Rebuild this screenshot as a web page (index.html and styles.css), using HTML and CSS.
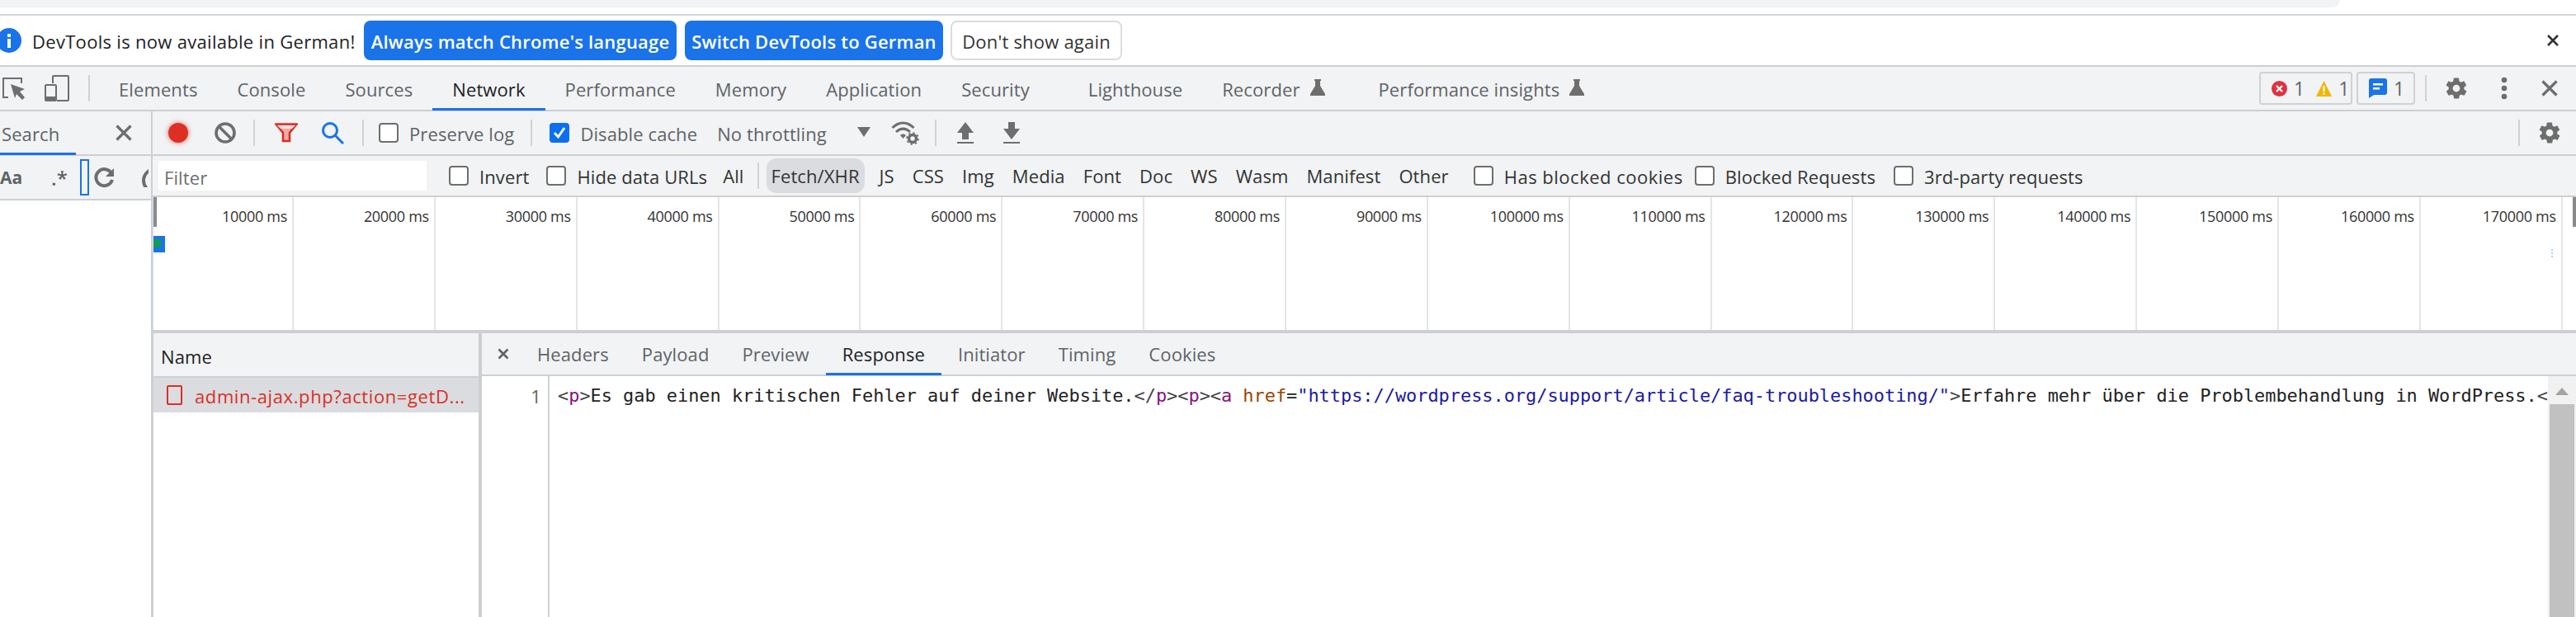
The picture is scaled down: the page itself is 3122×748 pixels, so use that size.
FILE: index.html
```html
<!DOCTYPE html>
<html lang="en">
<head>
    <meta charset="UTF-8">
    <title>DevTools Network</title>
    <link rel="stylesheet" href="styles.css">
</head>
<body>
    <!-- Browser strip above DevTools -->
    <div class="top-strip"><div class="omnibox"></div></div>

    <!-- Language infobar -->
    <div class="infobar">
        <svg class="info-icon" width="30" height="30" viewBox="0 0 30 30"><circle cx="15" cy="15" r="15" fill="#1a73e8"/><rect x="13" y="13" width="4" height="11" fill="#fff"/><rect x="13" y="7" width="4" height="4" fill="#fff"/></svg>
        <span class="info-text">DevTools is now available in German!</span>
        <button class="info-btn primary lang-btn">Always match Chrome's language</button>
        <button class="info-btn primary switch-btn">Switch DevTools to German</button>
        <button class="info-btn plain">Don't show again</button>
        <svg class="info-close" width="16" height="16" viewBox="0 0 16 16"><path d="M2 2l12 12M14 2L2 14" stroke="#333" stroke-width="2.6"/></svg>
    </div>

    <!-- Main tabs -->
    <div class="tabbar">
        <svg class="inspect-icon" width="30" height="30" viewBox="0 0 30 30"><path d="M9 26H3V3h22v6" fill="none" stroke="#6e6e6e" stroke-width="2"/><path d="M12 10l17 6-6 3 6 7-3 3-7-7-2 5z" fill="#6e6e6e"/></svg>
        <svg class="device-icon" width="30" height="32" viewBox="0 0 30 32"><path d="M10 10V2a1 1 0 0 1 1-1h17a1 1 0 0 1 1 1v28a1 1 0 0 1-1 1H15" fill="none" stroke="#6e6e6e" stroke-width="2"/><rect x="1" y="12" width="13" height="19" rx="1" fill="none" stroke="#6e6e6e" stroke-width="2"/><rect x="1" y="26" width="13" height="5" fill="#6e6e6e"/></svg>
        <span class="vline tabs-line"></span>
        <div class="tab">Elements</div>
        <div class="tab">Console</div>
        <div class="tab">Sources</div>
        <div class="tab active">Network</div>
        <div class="tab">Performance</div>
        <div class="tab">Memory</div>
        <div class="tab">Application</div>
        <div class="tab security-tab">Security</div>
        <div class="tab">Lighthouse</div>
        <div class="tab flask-tab">Recorder
            <svg width="18" height="20" viewBox="0 0 18 20"><path d="M5 0h8v2h-1v6l6 10v2H0v-2l6-10V2H5z" fill="#6e6e6e"/></svg>
        </div>
        <div class="tab flask-tab">Performance insights
            <svg width="18" height="20" viewBox="0 0 18 20"><path d="M5 0h8v2h-1v6l6 10v2H0v-2l6-10V2H5z" fill="#6e6e6e"/></svg>
        </div>
        <div class="tab-right">
            <div class="badge counts">
                <svg width="19" height="19" viewBox="0 0 19 19"><circle cx="9.5" cy="9.5" r="9.5" fill="#e0323f"/><path d="M6 6l7 7M13 6l-7 7" stroke="#fff" stroke-width="2.4"/></svg>
                <span class="count">1</span>
                <svg class="warn" width="19" height="19" viewBox="0 0 19 19"><path d="M9.5 0L19 19H0z" fill="#f2b600"/><rect x="8.4" y="6" width="2.2" height="7" fill="#fff"/><rect x="8.4" y="14.5" width="2.2" height="2.2" fill="#fff"/></svg>
                <span class="count">1</span>
            </div>
            <div class="badge issues">
                <svg width="22" height="24" viewBox="0 0 22 24"><path d="M3 0h16a3 3 0 0 1 3 3v14a3 3 0 0 1-3 3H6l-6 4V3a3 3 0 0 1 3-3z" fill="#1a73e8"/><path d="M5 6h12v2.4H5zM5 11h8v2.4H5z" fill="#fff"/></svg>
                <span class="count">1</span>
            </div>
            <span class="vline right-line"></span>
            <svg class="gear gear-top" width="30" height="30" viewBox="0 0 24 24"><path d="M19.4 13c.1-.3.1-.7.1-1s0-.7-.1-1l2.100-1.600c.2-.2.2-.4.1-.6l-2-3.500c-.1-.2-.4-.3-.6-.2l-2.500 1c-.5-.4-1.100-.7-1.700-1l-.4-2.700c0-.2-.2-.4-.5-.4h-4c-.3 0-.5.2-.5.4l-.4 2.700c-.6.3-1.200.6-1.700 1l-2.500-1c-.2-.1-.5 0-.6.2l-2 3.500c-.1.2-.1.4.1.6L4.600 11c-.1.3-.1.7-.1 1s0 .7.1 1l-2.100 1.600c-.2.2-.2.4-.1.6l2 3.500c.1.2.4.3.6.2l2.500-1c.5.4 1.100.7 1.700 1l.4 2.700c0 .2.2.4.5.4h4c.3 0 .5-.2.5-.4l.4-2.700c.6-.3 1.200-.6 1.700-1l2.500 1c.2.1.5 0 .6-.2l2-3.500c.1-.2.1-.4-.1-.6zM12 15.500a3.500 3.500 0 1 1 0-7 3.500 3.500 0 0 1 0 7z" fill="#6e6e6e"/></svg>
            <svg class="dots" width="8" height="28" viewBox="0 0 8 28"><circle cx="4" cy="4" r="3.3" fill="#6e6e6e"/><circle cx="4" cy="14" r="3.3" fill="#6e6e6e"/><circle cx="4" cy="24" r="3.3" fill="#6e6e6e"/></svg>
            <svg class="tab-close" width="20" height="20" viewBox="0 0 20 20"><path d="M1.500 1.500l17 17M18.500 1.500l-17 17" stroke="#6e6e6e" stroke-width="3.2"/></svg>
        </div>
    </div>

    <div class="panel">
        <!-- Search drawer -->
        <div class="sidebar">
            <div class="search-head">
                <div class="search-tab">Search</div>
                <svg width="20" height="20" viewBox="0 0 20 20"><path d="M1.500 1.500l17 17M18.500 1.500l-17 17" stroke="#6e6e6e" stroke-width="3.2"/></svg>
            </div>
            <div class="search-tools">
                <span class="case">Aa</span>
                <span class="regex">.*</span>
                <span class="focus-box"></span>
                <svg class="refresh" width="26" height="26" viewBox="0 0 26 26"><path d="M21 8a10 10 0 1 0 1 8" fill="none" stroke="#6e6e6e" stroke-width="4"/><path d="M24 2v10H14z" fill="#6e6e6e"/></svg>
                <span class="clipped"></span>
            </div>
        </div>

        <div class="network">
            <!-- Network toolbar -->
            <div class="toolbar">
                <span class="record"></span>
                <svg class="clear" width="26" height="26" viewBox="0 0 26 26"><circle cx="13" cy="13" r="11" fill="none" stroke="#6e6e6e" stroke-width="3.6"/><path d="M5 5l16 16" stroke="#6e6e6e" stroke-width="3.6"/></svg>
                <span class="vline line-a"></span>
                <svg class="funnel" width="28" height="24" viewBox="0 0 28 24"><path d="M1.500 1.500h25L18 12v10h-8V12z" fill="#f0a9a5" stroke="#d93025" stroke-width="2.6"/><path d="M3 3h22l-4 4H7z" fill="#f9dcda"/></svg>
                <svg class="search-icon" width="28" height="28" viewBox="0 0 28 28"><circle cx="11" cy="11" r="8.500" fill="none" stroke="#1a73e8" stroke-width="3"/><path d="M17 17l10 10" stroke="#1a73e8" stroke-width="3"/></svg>
                <span class="vline line-b"></span>
                <label class="check preserve"><span class="box"></span>Preserve log</label>
                <span class="vline line-c"></span>
                <label class="check disable"><span class="box on"><svg width="24" height="24" viewBox="0 0 24 24"><path d="M6 12l4.500 5L18 6" fill="none" stroke="#fff" stroke-width="2.8"/></svg></span>Disable cache</label>
                <span class="throttle">No throttling</span>
                <span class="caret"></span>
                <svg class="wifi" width="34" height="30" viewBox="0 0 34 30"><path d="M1.500 9c8-8 18-8 26 0M6 14c5.500-5 11.500-5 17 0" fill="none" stroke="#6e6e6e" stroke-width="3"/><path d="M11 18c2-2 5-2 7 0l-3.500 4z" fill="#6e6e6e"/><circle cx="26" cy="22" r="4.500" fill="none" stroke="#6e6e6e" stroke-width="3.5"/><circle cx="26" cy="22" r="7" fill="none" stroke="#6e6e6e" stroke-width="1.6" stroke-dasharray="2.5 3"/></svg>
                <span class="vline line-d"></span>
                <svg class="arrow up" width="22" height="26" viewBox="0 0 22 26"><path d="M11 0l10 13h-6v8H7v-8H1z" fill="#6e6e6e"/><rect x="1" y="24" width="20" height="2" fill="#6e6e6e"/></svg>
                <svg class="arrow down" width="22" height="26" viewBox="0 0 22 26"><path d="M11 21L1 8h6V0h8v8h6z" fill="#6e6e6e"/><rect x="1" y="24" width="20" height="2" fill="#6e6e6e"/></svg>
                <span class="vline line-e"></span>
                <svg class="gear" width="30" height="30" viewBox="0 0 24 24"><path d="M19.4 13c.1-.3.1-.7.1-1s0-.7-.1-1l2.100-1.600c.2-.2.2-.4.1-.6l-2-3.500c-.1-.2-.4-.3-.6-.2l-2.500 1c-.5-.4-1.100-.7-1.700-1l-.4-2.700c0-.2-.2-.4-.5-.4h-4c-.3 0-.5.2-.5.4l-.4 2.700c-.6.3-1.200.6-1.700 1l-2.500-1c-.2-.1-.5 0-.6.2l-2 3.500c-.1.2-.1.4.1.6L4.600 11c-.1.3-.1.7-.1 1s0 .7.1 1l-2.100 1.600c-.2.2-.2.4-.1.6l2 3.500c.1.2.4.3.6.2l2.500-1c.5.4 1.100.7 1.700 1l.4 2.700c0 .2.2.4.5.4h4c.3 0 .5-.2.5-.4l.4-2.700c.6-.3 1.200-.6 1.700-1l2.500 1c.2.1.5 0 .6-.2l2-3.500c.1-.2.1-.4-.1-.6zM12 15.500a3.500 3.500 0 1 1 0-7 3.500 3.500 0 0 1 0 7z" fill="#6e6e6e"/></svg>
            </div>

            <!-- Filter row -->
            <div class="filterbar">
                <div class="filter-input">Filter</div>
                <label class="check dark invert"><span class="box"></span>Invert</label>
                <label class="check dark hide-urls"><span class="box"></span>Hide data URLs</label>
                <span class="type all">All</span>
                <span class="vline line-f"></span>
                <span class="type selected">Fetch/XHR</span>
                <span class="type">JS</span>
                <span class="type">CSS</span>
                <span class="type">Img</span>
                <span class="type">Media</span>
                <span class="type">Font</span>
                <span class="type">Doc</span>
                <span class="type">WS</span>
                <span class="type">Wasm</span>
                <span class="type">Manifest</span>
                <span class="type">Other</span>
                <label class="check dark blocked"><span class="box"></span>Has blocked cookies</label>
                <label class="check dark blocked-req"><span class="box"></span>Blocked Requests</label>
                <label class="check dark third"><span class="box"></span>3rd-party requests</label>
            </div>

            <!-- Timeline overview -->
            <div class="overview">
                <div class="tick first">10000 ms</div>
                <div class="tick">20000 ms</div>
                <div class="tick">30000 ms</div>
                <div class="tick">40000 ms</div>
                <div class="tick">50000 ms</div>
                <div class="tick">60000 ms</div>
                <div class="tick">70000 ms</div>
                <div class="tick">80000 ms</div>
                <div class="tick">90000 ms</div>
                <div class="tick">100000 ms</div>
                <div class="tick">110000 ms</div>
                <div class="tick">120000 ms</div>
                <div class="tick">130000 ms</div>
                <div class="tick">140000 ms</div>
                <div class="tick">150000 ms</div>
                <div class="tick">160000 ms</div>
                <div class="tick">170000 ms</div>
                <span class="handle left"></span>
                <span class="handle right"></span>
                <span class="req-bar"><span class="req-fill"></span></span>
                <span class="req-dash"></span>
            </div>

            <!-- Requests and response -->
            <div class="split">
                <div class="names">
                    <div class="names-head">Name</div>
                    <div class="names-row">
                        <span class="file-icon"></span>
                        <span class="file-name">admin-ajax.php?action=getD...</span>
                    </div>
                </div>
                <div class="detail">
                    <div class="detail-tabs">
                        <svg class="detail-close" width="14" height="14" viewBox="0 0 14 14"><path d="M1.500 1.500l11 11M12.500 1.500l-11 11" stroke="#5f6368" stroke-width="2.6"/></svg>
                        <div class="dtab">Headers</div>
                        <div class="dtab">Payload</div>
                        <div class="dtab">Preview</div>
                        <div class="dtab active">Response</div>
                        <div class="dtab">Initiator</div>
                        <div class="dtab">Timing</div>
                        <div class="dtab">Cookies</div>
                    </div>
                    <div class="code">
                        <div class="gutter">1</div>
                        <div class="code-line"><span class="br">&lt;</span><span class="tg">p</span><span class="br">&gt;</span>Es gab einen kritischen Fehler auf deiner Website.<span class="br">&lt;/</span><span class="tg">p</span><span class="br">&gt;&lt;</span><span class="tg">p</span><span class="br">&gt;&lt;</span><span class="tg">a</span> <span class="at">href</span>=<span class="st">"https://wordpress.org/support/article/faq-troubleshooting/"</span><span class="br">&gt;</span>Erfahre mehr über die Problembehandlung in WordPress.<span class="br">&lt;</span></div>
                        <div class="scrollbar"><div class="scroll-up"></div><div class="scroll-thumb"></div></div>
                    </div>
                </div>
            </div>
        </div>
    </div>
</body>
</html>
```
FILE: styles.css
```css
* {
    margin: 0;
    padding: 0;
    box-sizing: border-box;
}

html, body {
    width: 3122px;
    height: 748px;
    overflow: hidden;
}

body {
    font-family: "Open Sans", "Noto Sans", sans-serif;
    font-size: 22px;
    letter-spacing: 0.1px;
    color: #5f6368;
    background-color: white;
}

.vline {
    display: block;
    flex: none;
    width: 2px;
    height: 32px;
    background-color: #d0d2d5;
}

/* Browser strip */
.top-strip {
    height: 19px;
    border-bottom: 2px solid #d5d6d8;
}

.omnibox {
    width: 2836px;
    height: 9px;
    background-color: #f1f3f4;
    border-bottom-right-radius: 14px;
}

/* Infobar */
.infobar {
    display: flex;
    align-items: center;
    height: 62px;
    border-bottom: 2px solid #cdcfd2;
}

.info-icon {
    margin-left: -4px;
    flex: none;
}

.info-text {
    margin-left: 13px;
    padding-top: 2px;
    color: #222;
    width: 402px;
    letter-spacing: 0.3px;
    white-space: nowrap;
}

.info-btn {
    height: 48px;
    border: none;
    border-radius: 8px;
    font-family: inherit;
    font-size: 22px;
    padding-top: 2px;
    white-space: nowrap;
}

.primary {
    background-color: #1a73e8;
    color: white;
    font-weight: 600;
    letter-spacing: 0.2px;
}

.lang-btn {
    width: 379px;
}

.switch-btn {
    width: 313px;
    margin-left: 10px;
}

.plain {
    width: 208px;
    margin-left: 9px;
    background-color: white;
    color: #333;
    border: 2px solid #dadce0;
    letter-spacing: 0.2px;
}

.info-close {
    margin-left: auto;
    margin-right: 20px;
}

/* Main tabs */
.tabbar {
    display: flex;
    align-items: center;
    height: 54px;
    background-color: #f1f3f4;
    border-bottom: 2px solid #cdcfd2;
}

.inspect-icon {
    margin-left: 1px;
    flex: none;
}

.device-icon {
    margin-left: 23px;
    flex: none;
}

.tabs-line {
    margin-left: 23px;
    margin-right: 11px;
}

.tab {
    display: flex;
    align-items: center;
    height: 52px;
    padding: 3px 24px 0;
    white-space: nowrap;
    border-bottom: 3px solid transparent;
    margin-bottom: -1px;
}

.tab.active {
    color: #202124;
    border-bottom-color: #1a73e8;
}

.security-tab {
    padding-right: 47px;
}

.flask-tab svg {
    margin-left: 12px;
    margin-top: -4px;
}

.flask-tab {
    padding-right: 41px;
}

.tab-right {
    display: flex;
    align-items: center;
    margin-left: auto;
}

.badge {
    display: flex;
    align-items: center;
    height: 40px;
    border: 2px solid #cfd1d4;
    border-radius: 4px;
}

.counts {
    width: 113px;
    padding-left: 13px;
}

.issues {
    width: 71px;
    margin-left: 5px;
    padding-left: 13px;
}

.count {
    margin-left: 8px;
    font-size: 23px;
    color: #5f6368;
}

.warn {
    margin-left: 14px;
}

.right-line {
    margin-left: 12px;
}

.gear-top {
    margin-left: 21px;
}

.dots {
    margin-left: 39px;
}

.tab-close {
    margin-left: 41px;
    margin-right: 22px;
}

/* Panel below the tabs */
.panel {
    display: flex;
    height: 613px;
}

.sidebar {
    width: 185px;
    flex: none;
    border-right: 2px solid #cdcfd2;
    background-color: white;
}

.search-head {
    display: flex;
    align-items: center;
    height: 54px;
    background-color: #f1f3f4;
    border-bottom: 2px solid #cdcfd2;
}

.search-tab {
    width: 92px;
    height: 54px;
    line-height: 56px;
    padding-left: 2px;
    border-bottom: 3px solid #1a73e8;
    flex: none;
}

.search-head svg {
    margin-left: 48px;
}

.search-tools {
    display: flex;
    align-items: center;
    height: 54px;
    background-color: #f1f3f4;
    border-bottom: 2px solid #cdcfd2;
}

.case {
    font-weight: 700;
    width: 62px;
    font-size: 21px;
    flex: none;
}

.regex {
    width: 35px;
    flex: none;
    font-size: 24px;
    font-weight: 600;
}

.focus-box {
    width: 11px;
    height: 44px;
    border: 2px solid #1a73e8;
    flex: none;
}

.refresh {
    margin-left: 6px;
    flex: none;
}

.clipped {
    display: block;
    width: 8px;
    height: 24px;
    margin-left: 32px;
    overflow: hidden;
    flex: none;
}

.clipped::before {
    content: "";
    display: block;
    width: 24px;
    height: 24px;
    border: 4px solid #6e6e6e;
    border-radius: 50%;
}

.network {
    flex: 1;
    min-width: 0;
}

/* Network toolbar */
.toolbar {
    display: flex;
    align-items: center;
    height: 54px;
    background-color: #f1f3f4;
    border-bottom: 2px solid #cdcfd2;
}

.record {
    flex: none;
    width: 24px;
    height: 24px;
    margin-left: 19px;
    border-radius: 50%;
    background-color: #dd3025;
    box-shadow: 0 0 5px 1px rgba(221, 48, 37, 0.5);
}

.clear {
    margin-left: 32px;
    flex: none;
}

.line-a {
    margin-left: 21px;
}

.funnel {
    margin-left: 24px;
    flex: none;
}

.search-icon {
    margin-left: 28px;
    flex: none;
}

.line-b {
    margin-left: 22px;
}

.check {
    display: flex;
    align-items: center;
    white-space: nowrap;
}

.check.dark {
    color: #333;
}

.box {
    display: block;
    flex: none;
    width: 24px;
    height: 24px;
    margin-right: 13px;
    background-color: white;
    border: 2px solid #6e6e6e;
    border-radius: 4px;
}

.box.on {
    background-color: #0b6ff0;
    border-color: #0b6ff0;
    position: relative;
}

.box.on svg {
    position: absolute;
    left: -2px;
    top: -2px;
}

.preserve {
    margin-left: 18px;
}

.line-c {
    margin-left: 20px;
}

.disable {
    margin-left: 21px;
}

.throttle {
    margin-left: 24px;
    white-space: nowrap;
}

.caret {
    flex: none;
    margin-left: 37px;
    width: 0;
    height: 0;
    border-left: 8px solid transparent;
    border-right: 8px solid transparent;
    border-top: 12px solid #6e6e6e;
}

.wifi {
    margin-left: 25px;
    flex: none;
}

.line-d {
    margin-left: 19px;
}

.arrow {
    flex: none;
}

.up {
    margin-left: 24px;
}

.down {
    margin-left: 34px;
}

.line-e {
    margin-left: auto;
}

.toolbar .gear {
    margin-left: 21px;
    margin-right: 17px;
    flex: none;
}

.check, .throttle {
    padding-top: 2px;
}

.box, .caret {
    margin-top: -2px;
}

/* Filter row */
.filterbar {
    display: flex;
    align-items: center;
    height: 50px;
    background-color: #f1f3f4;
    border-bottom: 2px solid #cdcfd2;
    color: #333;
}

.filter-input {
    width: 325px;
    height: 36px;
    margin-left: 7px;
    padding-left: 7px;
    line-height: 40px;
    background-color: white;
    color: #6e6e6e;
    flex: none;
}

.invert {
    margin-left: 27px;
}

.hide-urls {
    margin-left: 21px;
}

.type {
    padding: 1px 11px 0;
    line-height: 41px;
    white-space: nowrap;
    border-radius: 12px;
}

.all {
    margin-left: 8px;
}

.line-f {
    margin-left: 5px;
    margin-right: 9px;
}

.type.selected {
    padding: 1px 6px 0;
    background-color: #dadce0;
    margin-right: 7px;
}

.blocked {
    margin-left: 19px;
    letter-spacing: 0.5px;
}

.blocked-req {
    margin-left: 14px;
}

.third {
    margin-left: 22px;
}

/* Timeline overview */
.overview {
    position: relative;
    display: flex;
    height: 161px;
    background-color: white;
    border-left: 1px solid #cfe0f5;
    overflow: hidden;
}

.tick {
    flex: none;
    width: 171.87px;
    height: 100%;
    padding: 12px 6px 0 0;
    text-align: right;
    font-size: 18px;
    line-height: 23px;
    color: #333;
    border-right: 2px solid #e4e5e7;
    letter-spacing: -0.3px;
    white-space: nowrap;
}

.tick.first {
    width: 170px;
}

.handle {
    position: absolute;
    top: 0;
    width: 4px;
    height: 36px;
    background-color: #8a8a8a;
}

.handle.left {
    left: 0;
}

.handle.right {
    right: 0;
}

.req-bar {
    position: absolute;
    left: 0;
    top: 47px;
    width: 14px;
    height: 20px;
    padding-top: 4px;
    background-color: #1a73e8;
}

.req-fill {
    display: block;
    width: 9px;
    height: 10px;
    background-color: #0f9d58;
}

.req-dash {
    position: absolute;
    left: 2906px;
    top: 63px;
    height: 10px;
    border-left: 2px dotted #a9d0f5;
}

/* Requests and response */
.split {
    display: flex;
    height: 348px;
    border-top: 4px solid #cdcfd2;
    border-left: 1px solid #cdcfd2;
}

.names {
    width: 398px;
    flex: none;
    border-right: 4px solid #cdcfd2;
}

.names-head {
    height: 54px;
    line-height: 56px;
    padding-left: 9px;
    background-color: #f1f3f4;
    border-bottom: 2px solid #cdcfd2;
    color: #222;
}

.names-row {
    display: flex;
    align-items: center;
    height: 42px;
    padding-left: 16px;
    background-color: #dadce0;
}

.file-icon {
    flex: none;
    width: 19px;
    height: 24px;
    border: 2px solid #d93025;
    border-radius: 2px;
}

.file-name {
    margin-left: 15px;
    padding-top: 2px;
    color: #d93025;
    letter-spacing: 0.6px;
    white-space: nowrap;
}

.detail {
    flex: 1;
    min-width: 0;
}

.detail-tabs {
    display: flex;
    align-items: center;
    height: 52px;
    background-color: #f1f3f4;
    border-bottom: 2px solid #cdcfd2;
}

.detail-close {
    margin-left: 19px;
    margin-right: 14px;
    flex: none;
}

.dtab {
    display: flex;
    align-items: center;
    height: 50px;
    padding: 2px 20px 0;
    border-bottom: 3px solid transparent;
    margin-bottom: -1px;
}

.dtab.active {
    color: #202124;
    border-bottom-color: #1a73e8;
}

.code {
    display: flex;
    height: 292px;
}

.gutter {
    width: 82px;
    flex: none;
    padding: 10px 8px 0 0;
    text-align: right;
    border-right: 2px solid #d0d2d5;
    line-height: 28px;
}

.code-line {
    flex: 1;
    min-width: 0;
    padding: 10px 0 0 10px;
    font-family: "DejaVu Sans Mono", "Liberation Mono", monospace;
    font-size: 21.9px;
    letter-spacing: 0;
    line-height: 28px;
    color: #222;
    white-space: pre;
    overflow: hidden;
}

.br {
    color: #444;
}

.tg {
    color: #881280;
}

.at {
    color: #994500;
}

.st {
    color: #1a1aa6;
}

.scrollbar {
    flex: none;
    width: 34px;
    background-color: #f1f1f1;
    padding: 0 2px;
}

.scroll-up {
    width: 0;
    height: 0;
    margin: 14px auto 11px;
    border-left: 8px solid transparent;
    border-right: 8px solid transparent;
    border-bottom: 9px solid #a3a3a3;
}

.scroll-thumb {
    height: 258px;
    background-color: #c1c1c1;
}
```
